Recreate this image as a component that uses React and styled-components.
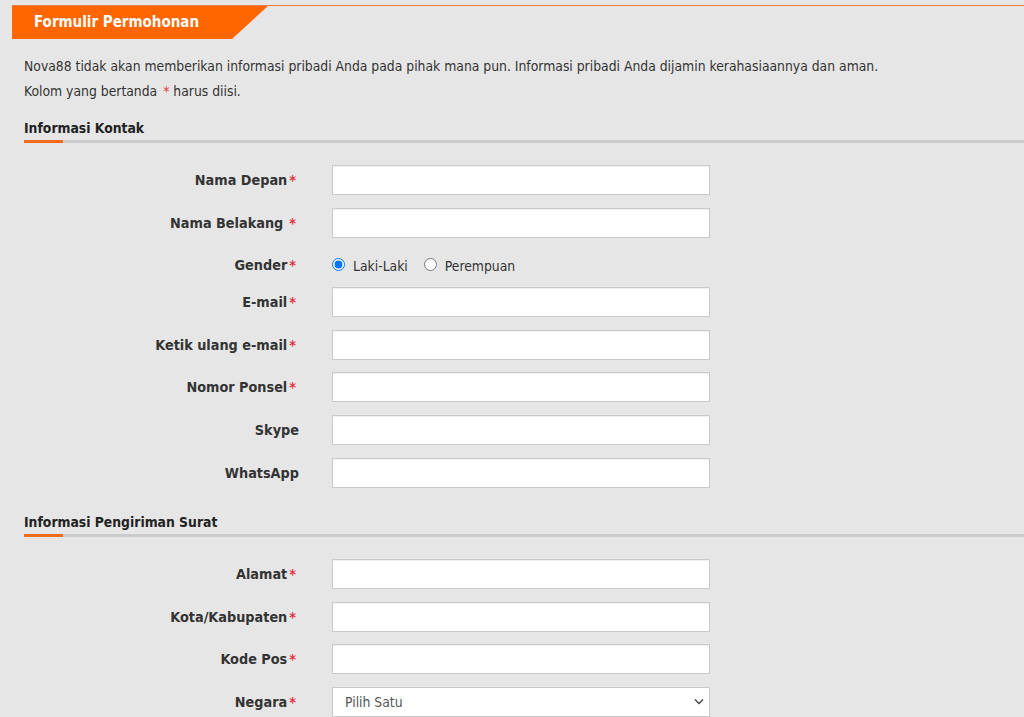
import styled, { createGlobalStyle } from 'styled-components';

const GlobalStyle = createGlobalStyle`
  html, body {
    margin: 0;
    padding: 0;
    background: #e6e6e6;
    font-family: "DejaVu Sans Condensed", "DejaVu Sans", Tahoma, sans-serif;
    color: #333;
  }
`;

const Page = styled.div`
  padding: 5px 0 0 12px;
  min-height: 717px;
  box-sizing: border-box;
  overflow: hidden;
`;

const HeaderBar = styled.div`
  border-top: 1px solid #f07b3f;
`;

const Tab = styled.div`
  width: 256px;
  height: 33px;
  background: #ff6600;
  color: #fff;
  font-weight: bold;
  font-size: 15px;
  line-height: 33px;
  padding-left: 22px;
  box-sizing: border-box;
  clip-path: polygon(0 0, 100% 0, 220px 100%, 0 100%);
`;

const Body = styled.div`
  padding: 15px 0 0 12px;
`;

const Note = styled.p`
  margin: 0;
  font-size: 13.8px;
  line-height: 25px;
`;

const Star = styled.span`
  color: #e2323c;
  margin-left: ${(p) => (p.spaced ? '6px' : '2px')};
`;

const SectionTitle = styled.h3`
  margin: ${(p) => (p.first ? '16px' : '26px')} 0 0;
  font-size: 13.8px;
  font-weight: bold;
  color: #222;
  line-height: 16px;
  padding-bottom: 4px;
  border-bottom: 3px solid #cbcbcb;
  position: relative;
  &::after {
    content: '';
    position: absolute;
    left: 0;
    bottom: -3px;
    width: 39px;
    height: 3px;
    background: #f26a1b;
  }
`;

const Fields = styled.div`
  display: flex;
  flex-direction: column;
  gap: 12.7px;
  padding-top: 22px;
`;

const Row = styled.div`
  display: grid;
  grid-template-columns: 275px 378px;
  column-gap: 33px;
  align-items: center;
  min-height: ${(p) => (p.short ? '17px' : '30px')};
  padding-top: ${(p) => (p.short ? '5px' : '0')};
`;

const Label = styled.label`
  text-align: right;
  font-size: 14.3px;
  font-weight: bold;
  color: #333;
  padding-right: ${(p) => (p.plain ? '0' : '3px')};
`;

const TextInput = styled.input`
  height: 30px;
  box-sizing: border-box;
  border: 1px solid #c9c9c9;
  background: #fff;
  margin: 0;
  width: 100%;
  box-shadow: inset 0 1px 1px rgba(0, 0, 0, 0.06);
`;

const Radios = styled.div`
  display: flex;
  align-items: center;
  font-size: 13.8px;
  color: #333;
  padding-top: 3px;
`;

const RadioOption = styled.label`
  display: flex;
  align-items: center;
  margin-right: 16px;
  input {
    margin: 0 8px 0 0;
    width: 13px;
    height: 13px;
    position: relative;
    top: -2px;
  }
`;

const SelectWrap = styled.div`
  position: relative;
  height: 30px;
`;

const Select = styled.select`
  appearance: none;
  width: 100%;
  height: 30px;
  border: 1px solid #c9c9c9;
  background: #fff;
  padding: 0 12px;
  font-family: inherit;
  font-size: 13.8px;
  color: #555;
`;

const Chevron = styled.svg`
  position: absolute;
  right: 6px;
  top: 11px;
  pointer-events: none;
`;

const Field = ({ label, required, spaced }) => (
  <Row>
    <Label plain={!required}>
      {label}
      {required && <Star spaced={spaced}>*</Star>}
    </Label>
    <TextInput type="text" />
  </Row>
);

export default function App() {
  return (
    <>
      <GlobalStyle />
      <Page>
        <HeaderBar>
          <Tab>Formulir Permohonan</Tab>
        </HeaderBar>
        <Body>
          <Note>
            Nova88 tidak akan memberikan informasi pribadi Anda pada pihak mana pun. Informasi pribadi Anda dijamin kerahasiaannya dan aman.
          </Note>
          <Note>
            Kolom yang bertanda <Star as="span">*</Star> harus diisi.
          </Note>

          <SectionTitle first>Informasi Kontak</SectionTitle>
          <Fields>
            <Field label="Nama Depan" required />
            <Field label="Nama Belakang" required spaced />
            <Row short>
              <Label>
                Gender<Star>*</Star>
              </Label>
              <Radios>
                <RadioOption>
                  <input type="radio" name="gender" defaultChecked />
                  Laki-Laki
                </RadioOption>
                <RadioOption>
                  <input type="radio" name="gender" />
                  Perempuan
                </RadioOption>
              </Radios>
            </Row>
            <Field label="E-mail" required />
            <Field label="Ketik ulang e-mail" required />
            <Field label="Nomor Ponsel" required />
            <Field label="Skype" />
            <Field label="WhatsApp" />
          </Fields>

          <SectionTitle>Informasi Pengiriman Surat</SectionTitle>
          <Fields>
            <Field label="Alamat" required />
            <Field label="Kota/Kabupaten" required />
            <Field label="Kode Pos" required />
            <Row>
              <Label>
                Negara<Star>*</Star>
              </Label>
              <SelectWrap>
                <Select defaultValue="">
                  <option value="">Pilih Satu</option>
                </Select>
                <Chevron width="10" height="7" viewBox="0 0 10 7">
                  <path d="M1 1.5l4 4 4-4" fill="none" stroke="#444" strokeWidth="1.4" />
                </Chevron>
              </SelectWrap>
            </Row>
          </Fields>
        </Body>
      </Page>
    </>
  );
}
